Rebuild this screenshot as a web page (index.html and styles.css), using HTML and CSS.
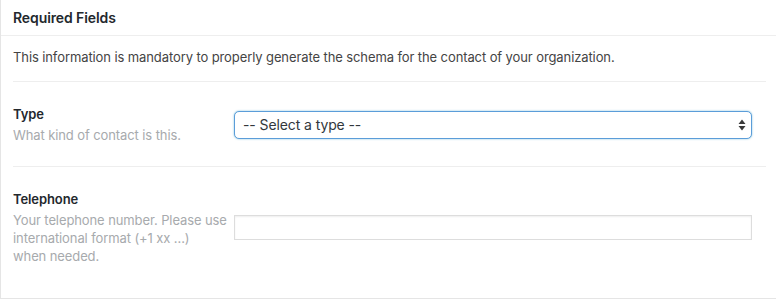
FILE: index.html
```html
<!DOCTYPE html>
<html>
<head>
<meta charset="utf-8">
<link rel="stylesheet" href="styles.css">
</head>
<body>
<div class="postbox">
  <h2 class="hndle">Required Fields</h2>
  <div class="inside">
    <p class="intro">This information is mandatory to properly generate the schema for the contact of your organization.</p>
    <div class="row">
      <div class="label-col">
        <div class="label">Type</div>
        <div class="desc">What kind of contact is this.</div>
      </div>
      <div class="field-col">
        <div class="select-wrap">
          <select class="select">
            <option>-- Select a type --</option>
          </select>
          <svg class="arrows" width="8" height="12" viewBox="0 0 8 12"><path d="M4 0.5 L7.5 5 L0.5 5 Z M4 11.5 L7.5 7 L0.5 7 Z" fill="#3a3a3a"/></svg>
        </div>
      </div>
    </div>
    <div class="row last">
      <div class="label-col">
        <div class="label">Telephone</div>
        <div class="desc">Your telephone number. Please use international format (+1 xx ...)<br>when needed.</div>
      </div>
      <div class="field-col">
        <input class="text" type="text">
      </div>
    </div>
  </div>
</div>
</body>
</html>
```
FILE: styles.css
```css
html, body {
  margin: 0;
  padding: 0;
  background: #fff;
}
body {
  font-family: Inter, "Liberation Sans", Arial, sans-serif;
  font-size: 13px;
  letter-spacing: -0.1px;
  color: #444;
}
.postbox {
  width: 777px;
  border-left: 1px solid #e5e5e5;
  border-bottom: 1px solid #e5e5e5;
  background: #fff;
}
.hndle {
  margin: 0;
  padding: 8px 12px;
  font-size: 14px;
  font-weight: 600;
  line-height: 19px;
  color: #23282d;
  border-bottom: 1px solid #eee;
}
.inside {
  padding: 0 12px 11px 12px;
}
.intro {
  margin: 0;
  padding: 12px 0 15px 0;
  line-height: 18px;
  color: #444;
  border-bottom: 1px solid #eee;
}
.row {
  display: flex;
  align-items: center;
  padding: 23px 0 22px 0;
  border-bottom: 1px solid #eee;
}
.row.last {
  border-bottom: none;
}
.label-col {
  width: 221px;
  flex: none;
}
.label {
  font-weight: 600;
  color: #23282d;
  line-height: 18px;
  margin-bottom: 3px;
}
.desc {
  color: #a7aaad;
  line-height: 18px;
  width: 214px;
}
.field-col {
  flex: 1;
  padding-right: 14px;
}
.select-wrap {
  position: relative;
}
.select {
  display: block;
  width: 100%;
  height: 28px;
  margin: 0;
  padding: 0 24px 0 8px;
  -webkit-appearance: none;
  appearance: none;
  font-family: Inter, "Liberation Sans", Arial, sans-serif;
  font-size: 14px;
  letter-spacing: -0.1px;
  color: #32373c;
  background: #fff;
  border: 1px solid #5b9dd9;
  border-radius: 5px;
  box-shadow: 0 0 2px rgba(30, 140, 190, 0.6);
  outline: none;
}
.arrows {
  position: absolute;
  right: 6px;
  top: 8px;
}
.text {
  display: block;
  box-sizing: border-box;
  width: 100%;
  height: 25px;
  margin: 0;
  padding: 2px 6px;
  border: 1px solid #ddd;
  box-shadow: inset 0 1px 2px rgba(0, 0, 0, 0.07);
  background: #fff;
  font-family: Inter, "Liberation Sans", Arial, sans-serif;
  font-size: 14px;
  outline: none;
}
```
